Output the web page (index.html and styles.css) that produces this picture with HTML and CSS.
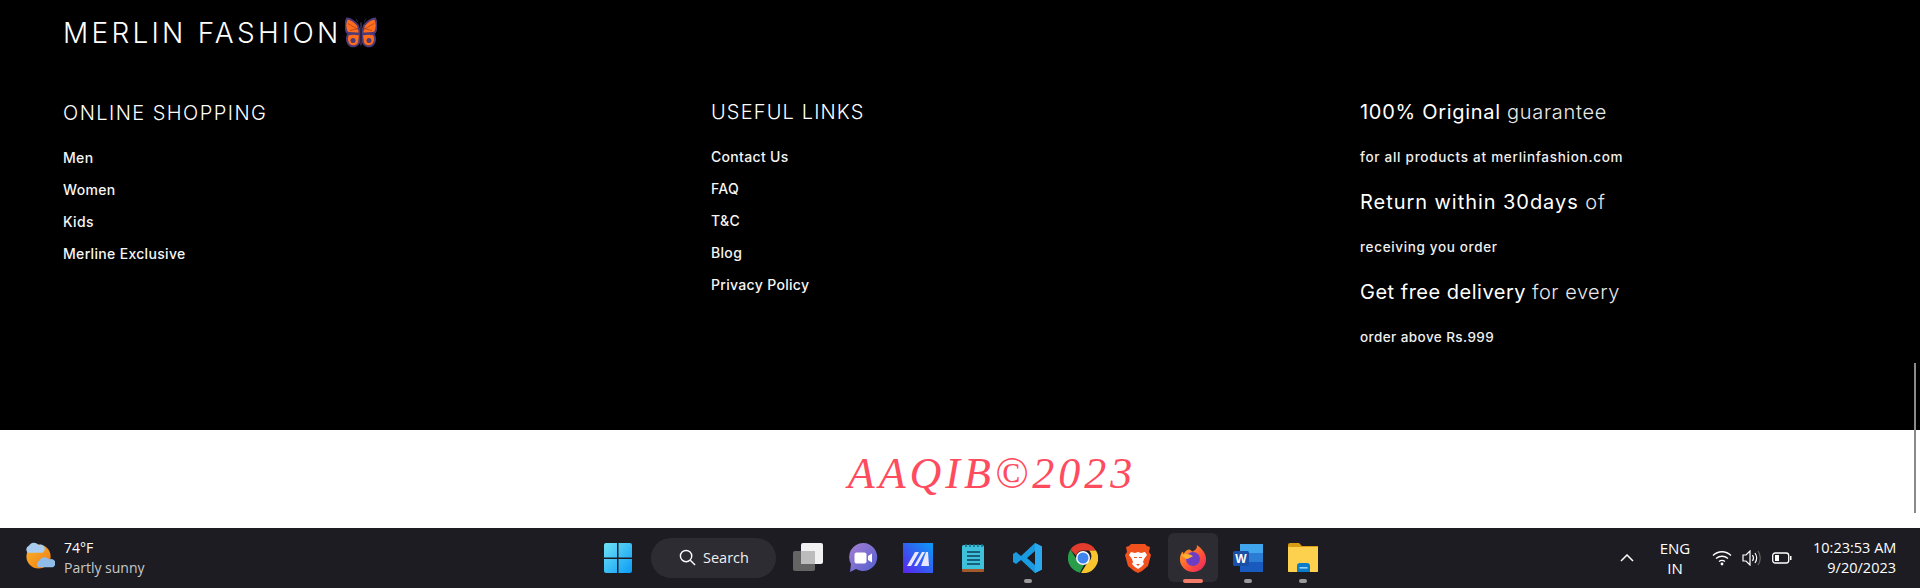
FILE: index.html
```html
<!DOCTYPE html>
<html lang="en">
<head>
<meta charset="utf-8">
<title>Merlin Fashion</title>
<link rel="stylesheet" href="styles.css">
</head>
<body>
<div class="viewport">
  <footer class="footer">
    <h1 class="brand"><span>MERLIN FASHION</span>
      <svg class="butterfly" viewBox="0 0 32 30" aria-hidden="true">
        <path d="M13 5 11 1M19 5l2-4" stroke="#2b2440" fill="none" stroke-width="1"/>
        <path d="M15 16 13 8C10 4 5 1 2 1 0 5 0 11 2 15c4 1 9 1 13 1Z" fill="#ff6d1c" stroke="#4d3a78" stroke-width="2"/>
        <path d="M17 16l2-8c3-4 8-7 11-7 2 4 2 10 0 14-4 1-9 1-13 1Z" fill="#ff6d1c" stroke="#4d3a78" stroke-width="2"/>
        <path d="M15 17c-4-1-9-1-12 0-2 4-1 9 2 11 4 2 8 0 9-3Z" fill="#ff6d1c" stroke="#4d3a78" stroke-width="2"/>
        <path d="M17 17c4-1 9-1 12 0 2 4 1 9-2 11-4 2-8 0-9-3Z" fill="#ff6d1c" stroke="#4d3a78" stroke-width="2"/>
        <circle cx="8" cy="23" r="2.5" fill="#4d3a78"/><circle cx="24" cy="23" r="2.5" fill="#4d3a78"/>
        <path d="M15 5h2v23h-2z" fill="#2b2440"/>
        <path d="M3 6l10 6M5 13l8-2M29 6l-10 6M27 13l-8-2" stroke="#a8401c" stroke-width=".8"/>
      </svg>
    </h1>
    <div class="columns">
      <section class="col col-first">
        <h2 class="col-title shop-title">ONLINE SHOPPING</h2>
        <ul class="links">
          <li>Men</li><li>Women</li><li>Kids</li><li>Merline Exclusive</li>
        </ul>
      </section>
      <section class="col">
        <h2 class="col-title useful-title">USEFUL LINKS</h2>
        <ul class="links">
          <li>Contact Us</li><li>FAQ</li><li>T&amp;C</li><li>Blog</li><li>Privacy Policy</li>
        </ul>
      </section>
      <section class="col promises">
        <p class="promise p-original"><strong>100% Original</strong> guarantee</p>
        <p class="note n-all">for all products at merlinfashion.com</p>
        <p class="promise p-return"><strong>Return within 30days</strong> of</p>
        <p class="note n-receive">receiving you order</p>
        <p class="promise p-free"><strong>Get free delivery</strong> for every</p>
        <p class="note n-order">order above Rs.999</p>
      </section>
    </div>
  </footer>
  <div class="credit"><span class="credit-text">AAQIB©2023</span></div>
  <div class="scrollbar"></div>
</div>

<div class="taskbar">
  <div class="weather">
    <svg class="weather-icon" viewBox="0 0 32 32" aria-hidden="true">
      <defs><linearGradient id="sun" x1="0" y1="0" x2="1" y2="1"><stop offset="0" stop-color="#fbb62c"/><stop offset="1" stop-color="#ee7a12"/></linearGradient></defs>
      <circle cx="15" cy="16" r="12.5" fill="url(#sun)"/>
      <path d="M4 12a4 4 0 0 1 1-7 6 6 0 0 1 10-1 4 4 0 0 1 4 8Z" fill="#a9cdf0"/>
      <path d="M15 27a4 4 0 0 1 1-7 6 6 0 0 1 10-1 4 4 0 0 1 4 8Z" fill="#8fbce8"/>
    </svg>
    <div class="weather-text"><div class="temp">74°F</div><div class="cond">Partly sunny</div></div>
  </div>

  <div class="apps">
    <div class="slot">
      <svg class="icon" viewBox="0 0 30 30" aria-hidden="true">
        <defs><linearGradient id="win" x1="0" y1="0" x2="1" y2="1"><stop offset="0" stop-color="#6fe3f5"/><stop offset="1" stop-color="#0a9bf5"/></linearGradient></defs>
        <path d="M1 2a2 2 0 0 1 2-2h11v14.500H1ZM15.500 0H27a2 2 0 0 1 2 2v12.500H15.500ZM1 16h13v14H3a2 2 0 0 1-2-2ZM15.500 16H29v12a2 2 0 0 1-2 2H15.500Z" fill="url(#win)"/>
      </svg>
    </div>
    <div class="slot slot-search">
      <div class="search">
        <svg class="search-icon" viewBox="0 0 18 18" aria-hidden="true"><circle cx="7.500" cy="7.500" r="6" fill="none" stroke="#fff" stroke-width="1.500"/><path d="m12 12 5 5" stroke="#fff" stroke-width="1.500"/></svg>
        <span>Search</span>
      </div>
    </div>
    <div class="slot">
      <svg class="icon" viewBox="0 0 30 30" aria-hidden="true">
        <rect x="8" y="0" width="22" height="21" rx="2" fill="#f1f1f1"/>
        <rect x="0" y="8" width="22" height="20" rx="2" fill="#6d6d6d" fill-opacity=".9"/>
        <rect x="8" y="8" width="14" height="13" fill="#bcbcbc"/>
      </svg>
    </div>
    <div class="slot">
      <svg class="icon" viewBox="0 0 30 30" aria-hidden="true">
        <defs><linearGradient id="chat" x1="0" y1="0" x2="1" y2="1"><stop offset="0" stop-color="#a77fd2"/><stop offset="1" stop-color="#4f5fd0"/></linearGradient></defs>
        <path d="M15 0a14 14 0 1 1-7 26l-6 3 1-8A14 14 0 0 1 15 0Z" fill="url(#chat)"/>
        <rect x="6.500" y="9.500" width="12" height="11" rx="2" fill="#fff"/>
        <path d="m20 13 4-2.500v9L20 17Z" fill="#fff"/>
      </svg>
    </div>
    <div class="slot">
      <svg class="icon" viewBox="0 0 30 30" aria-hidden="true">
        <defs><linearGradient id="ma" x1="0" y1="1" x2="1" y2="0"><stop offset="0" stop-color="#5a22ee"/><stop offset="1" stop-color="#0a9cf5"/></linearGradient></defs>
        <rect width="30" height="30" fill="url(#ma)"/>
        <path d="M4 23 12 9h4L8 23ZM11 23l8-14h3l-8 14ZM18 23l5-14h2l1 14Z" fill="#e9e6ff"/>
      </svg>
    </div>
    <div class="slot">
      <svg class="icon icon-notepad" viewBox="0 0 24 30" aria-hidden="true">
        <rect x="1" y="2" width="22" height="26" rx="1.500" fill="#3fc1dc"/>
        <path d="M1 26h22v2a1 1 0 0 1-1 1H2a1 1 0 0 1-1-1Z" fill="#a5592b"/>
        <path d="M5 1v3M9 1v3M13 1v3M17 1v3M21 1v3" stroke="#126c88" stroke-width="1.500"/>
        <path d="M6 9h13M6 13h13M6 17h13M6 21h13" stroke="#0c3f58" stroke-width="1.600"/>
      </svg>
    </div>
    <div class="slot">
      <span class="dot"></span>
      <svg class="icon" viewBox="0 0 30 30" aria-hidden="true">
        <path d="M22 0 29 3.500v23L22 30 8 17l-5 4-3-2v-8l3-2 5 4Zm0 8-8 7 8 7Z" fill="#1a9ae0"/>
        <path d="M22 0 29 3.500v23L22 30Z" fill="#2aa9ee"/>
      </svg>
    </div>
    <div class="slot">
      <svg class="icon" viewBox="0 0 30 30" aria-hidden="true">
        <path d="M15 0a15 15 0 0 1 13 7.500H15a7.500 7.500 0 0 0-7 5L2.500 6.500A15 15 0 0 1 15 0Z" fill="#e33b2e"/>
        <path d="M2.500 6.500 9 17a7 7 0 0 0 7 5l-4 7.700A15 15 0 0 1 2.500 6.500Z" fill="#2a9d4a"/>
        <path d="M28 7.500A15 15 0 0 1 13 30l6.500-10.500A7.500 7.500 0 0 0 21 7.500Z" fill="#fbc52d"/>
        <circle cx="15" cy="15" r="7" fill="#fff"/><circle cx="15" cy="15" r="5.500" fill="#3f85f0"/>
      </svg>
    </div>
    <div class="slot">
      <svg class="icon icon-brave" viewBox="0 0 26 30" aria-hidden="true">
        <path d="M6 1h14l2 2 3 1-1 5 2 3-3 11-6 5-4 2-4-2-6-5-3-11 2-3-1-5 3-1Z" fill="#f0511d"/>
        <path d="M6 9l4 1 3-1 3 1 4-1 2 3-3 4-1 3 1 2-3 3-3 2-3-2-3-3 1-2-1-3-3-4Z" fill="#fff"/>
        <path d="M9 14h3v1H9zM14 14h3v1h-3zM11 21h4l-2 2Z" fill="#f0511d"/>
      </svg>
    </div>
    <div class="slot slot-active">
      <span class="bar"></span>
      <svg class="icon icon-fox" viewBox="0 0 30 30" aria-hidden="true">
        <defs><linearGradient id="fox" x1="0" y1="0" x2="1" y2="1"><stop offset="0" stop-color="#ffb020"/><stop offset=".6" stop-color="#ff4f3a"/><stop offset="1" stop-color="#e5206e"/></linearGradient></defs>
        <path d="M19 1c5 3 10 9 10 15a14 14 0 0 1-28 0c0-3 1-6 3-8l1 3c1-3 4-5 6-5 1 0 2 1 3 2 3-1 6-3 5-7Z" fill="url(#fox)"/>
        <circle cx="15" cy="16" r="7.500" fill="#6c3ec6"/>
        <path d="M3 12c3-2 8-2 12 1l-6 3c-2 0-4-2-6-4Z" fill="#ffb32c"/>
      </svg>
    </div>
    <div class="slot">
      <span class="dot"></span>
      <svg class="icon" viewBox="0 0 30 30" aria-hidden="true">
        <rect x="7" y="1" width="23" height="9" fill="#41a5ee"/>
        <rect x="7" y="10" width="23" height="9" fill="#2b7cd3"/>
        <rect x="7" y="19" width="23" height="10" fill="#185abd"/>
        <rect x="0" y="8" width="16" height="15" rx="1.500" fill="#1a4fa8"/>
        <text x="8" y="20" class="word-w">W</text>
      </svg>
    </div>
    <div class="slot">
      <span class="dot"></span>
      <svg class="icon" viewBox="0 0 30 30" aria-hidden="true">
        <path d="M0 2a2 2 0 0 1 2-2h9l3 3h16v25a1 1 0 0 1-1 1H1a1 1 0 0 1-1-1Z" fill="#d99c12"/>
        <path d="M0 4h30v24a1 1 0 0 1-1 1H1a1 1 0 0 1-1-1Z" fill="#fdd04e"/>
        <path d="M9 29v-6a3 3 0 0 1 3-3h7a3 3 0 0 1 3 3v6Z" fill="#0d7bc9"/>
        <rect x="11.500" y="24" width="8" height="1.600" fill="#8dd2f8"/>
      </svg>
    </div>
  </div>

  <div class="tray">
    <svg class="chevron" viewBox="0 0 14 8" aria-hidden="true"><path d="m1 7 6-6 6 6" fill="none" stroke="#fff" stroke-width="1.500"/></svg>
    <div class="lang"><div>ENG</div><div>IN</div></div>
    <div class="status">
      <svg class="wifi" viewBox="0 0 20 16" aria-hidden="true"><path d="M1 5.500c5-5 13-5 18 0M4 8.500c3.500-3 8.500-3 12 0M7 11.500c2-1.500 4-1.500 6 0" fill="none" stroke="#fff" stroke-width="1.300"/><circle cx="10" cy="14" r="1.400" fill="#fff"/></svg>
      <svg class="volume" viewBox="0 0 20 16" aria-hidden="true"><path d="M1 5h3l4-4v14l-4-4H1Z" fill="none" stroke="#fff" stroke-width="1.200"/><path d="M10.500 5c1.300 2 1.300 4 0 6M13 3c2 3 2 7 0 10" fill="none" stroke="#fff" stroke-width="1.200"/><path d="M16 1c3 4 3 10 0 14" fill="none" stroke="#666" stroke-width="1.200"/></svg>
      <svg class="battery" viewBox="0 0 20 12" aria-hidden="true"><rect x=".7" y="1" width="16" height="10" rx="2.500" fill="none" stroke="#fff" stroke-width="1.300"/><rect x="3" y="3" width="4" height="6" fill="#fff"/><rect x="18" y="4" width="1.500" height="4" fill="#fff"/></svg>
    </div>
    <div class="clock"><div>10:23:53 AM</div><div>9/20/2023</div></div>
  </div>
</div>
</body>
</html>
```
FILE: styles.css
```css
* { box-sizing: border-box; }
html, body { margin: 0; padding: 0; height: 588px; overflow: hidden; background: #000; }
body { font-family: "Inter", "Liberation Sans", sans-serif; color: #fff; }

.viewport { position: relative; height: 528px; }

.footer { background: #000; height: 430px; padding: 16px 0 0 63px; }
.brand { display: flex; align-items: center; gap: 4px; margin: 0; height: 34px; font-size: 28px; font-weight: 350; letter-spacing: 3.25px; line-height: 34px; }
.butterfly { width: 32px; height: 31px; flex: none; margin-top: -1px; }

.columns { display: grid; grid-template-columns: 648px 649px 1fr; margin-top: 50px; }
.col-first { padding-top: 1px; }
.col-title { margin: 0; font-size: 20px; font-weight: 350; line-height: 24px; color: #fff; }
.shop-title { letter-spacing: 1.45px; }
.useful-title { letter-spacing: 1.15px; }

.links { list-style: none; margin: 21px 0 0; padding: 0; }
.links li { height: 32px; line-height: 24px; font-size: 14px; font-weight: 450; letter-spacing: .32px; color: #f5f5f5; }

.promises p { margin: 0; height: 45px; }
.promise { font-size: 20px; line-height: 24px; font-weight: 300; color: #e8e8e8; }
.promise strong { font-weight: 400; color: #fff; }
.p-original { letter-spacing: .7px; }
.p-return { letter-spacing: .95px; }
.p-free { letter-spacing: .5px; }
.note { font-size: 13.5px; line-height: 24px; font-weight: 450; color: #f0f0f0; }
.n-all { letter-spacing: .72px; }
.n-receive { letter-spacing: .65px; }
.n-order { letter-spacing: .42px; }

.credit { background: #fff; height: 98px; display: flex; justify-content: center; padding: 19px 0 0 64px; }
.credit-text { font-family: "Liberation Serif", serif; font-style: italic; font-size: 44px; line-height: 50px; letter-spacing: 4px; color: #ff4b5e; }

.scrollbar { position: absolute; right: 4px; top: 363px; width: 2px; height: 150px; background: #8a8a8a; }

.taskbar { display: grid; grid-template-columns: 1fr auto 1fr; height: 60px; background: #1c1c22; font-family: "Open Sans", "Noto Sans", sans-serif; font-size: 14px; color: #fff; }

.weather { display: flex; align-items: center; padding-left: 24px; gap: 9px; }
.weather-icon { width: 31px; height: 31px; flex: none; margin-top: -3px; }
.weather-text { line-height: 20px; }
.temp { color: #fff; }
.cond { color: #c8c8c8; }

.apps { display: flex; gap: 5px; align-items: stretch; }
.slot { position: relative; width: 50px; height: 60px; display: flex; align-items: center; justify-content: center; padding-bottom: 1px; }
.slot-search { width: 130px; }
.icon { width: 30px; height: 30px; display: block; }
.icon-notepad { width: 24px; }
.icon-brave { width: 26px; }
.icon-fox { width: 28px; height: 28px; }
.search { display: flex; align-items: center; justify-content: center; gap: 7px; width: 125px; height: 40px; padding-left: 2px; border-radius: 20px; background: #2c2c32; font-size: 14.5px; color: #f0f0f0; margin-left: 1px; }
.search-icon { width: 17px; height: 17px; }
.word-w { font-family: "Liberation Sans", sans-serif; font-weight: 700; font-size: 12px; fill: #fff; text-anchor: middle; }

.slot-active::before { content: ""; position: absolute; left: 0; right: 0; top: 5px; height: 49px; background: #2c2c32; border-radius: 6px; }
.slot-active .icon { position: relative; }
.dot { position: absolute; left: 21px; top: 51px; width: 8px; height: 4px; border-radius: 2px; background: #9a9a9a; }
.bar { position: absolute; left: 15px; top: 51px; width: 20px; height: 4px; border-radius: 2px; background: #f47b6a; z-index: 1; }

.tray { display: flex; align-items: center; justify-content: flex-end; padding-right: 24px; }
.chevron { width: 14px; height: 8px; margin-right: 21px; }
.lang { width: 40px; text-align: center; line-height: 20px; font-size: 15px; margin-right: 17px; }
.status { display: flex; align-items: center; gap: 10px; margin-right: 21px; }
.wifi { width: 20px; height: 16px; }
.volume { width: 20px; height: 16px; }
.battery { width: 20px; height: 12px; }
.clock { width: 83px; text-align: right; line-height: 20px; font-size: 14.5px; white-space: nowrap; }
```
